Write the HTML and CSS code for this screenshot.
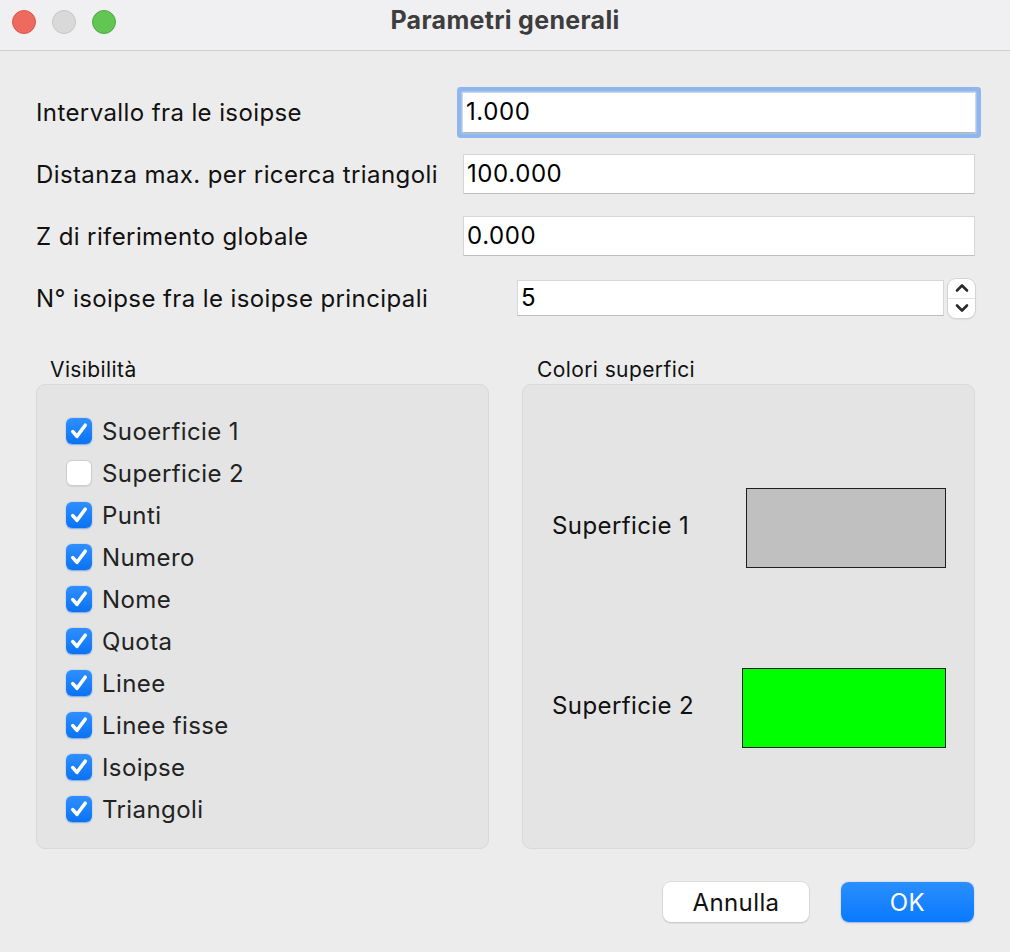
FILE: index.html
```html
<!DOCTYPE html>
<html lang="it">
<head>
<meta charset="utf-8">
<title>Parametri generali</title>
<link rel="stylesheet" href="styles.css">
</head>
<body>
<div class="window">
  <div class="titlebar">
    <div class="lights">
      <span class="light red"></span>
      <span class="light gray"></span>
      <span class="light green"></span>
    </div>
    <div class="title">Parametri generali</div>
    <div></div>
  </div>
  <div class="content">
    <div class="fields">
      <div class="row">
        <span class="label">Intervallo fra le isoipse</span>
        <div class="input focused">1.000</div>
      </div>
      <div class="row">
        <span class="label">Distanza max. per ricerca triangoli</span>
        <div class="input">100.000</div>
      </div>
      <div class="row">
        <span class="label">Z di riferimento globale</span>
        <div class="input">0.000</div>
      </div>
      <div class="row">
        <span class="label">N° isoipse fra le isoipse principali</span>
        <div class="spin">
          <div class="input spin-field">5</div>
          <div class="stepper">
            <span class="step up"><svg width="16" height="10" viewBox="0 0 16 10"><path d="M3 7.5 L8 2.5 L13 7.5" fill="none" stroke="#2a2a2a" stroke-width="2.6" stroke-linecap="round" stroke-linejoin="round"/></svg></span>
            <span class="step down"><svg width="16" height="10" viewBox="0 0 16 10"><path d="M3 2.5 L8 7.5 L13 2.5" fill="none" stroke="#2a2a2a" stroke-width="2.6" stroke-linecap="round" stroke-linejoin="round"/></svg></span>
          </div>
        </div>
      </div>
    </div>

    <div class="groups">
      <div class="group">
        <div class="group-title">Visibilità</div>
        <div class="group-box checks">
          <div class="check"><span class="box on"><svg width="26" height="26" viewBox="0 0 26 26"><path d="M6.8 13.6 L11 18.3 L19.2 7.2" fill="none" stroke="#fff" stroke-width="3.6" stroke-linecap="round" stroke-linejoin="round"/></svg></span>Suoerficie 1</div>
          <div class="check"><span class="box off"></span>Superficie 2</div>
          <div class="check"><span class="box on"><svg width="26" height="26" viewBox="0 0 26 26"><path d="M6.8 13.6 L11 18.3 L19.2 7.2" fill="none" stroke="#fff" stroke-width="3.6" stroke-linecap="round" stroke-linejoin="round"/></svg></span>Punti</div>
          <div class="check"><span class="box on"><svg width="26" height="26" viewBox="0 0 26 26"><path d="M6.8 13.6 L11 18.3 L19.2 7.2" fill="none" stroke="#fff" stroke-width="3.6" stroke-linecap="round" stroke-linejoin="round"/></svg></span>Numero</div>
          <div class="check"><span class="box on"><svg width="26" height="26" viewBox="0 0 26 26"><path d="M6.8 13.6 L11 18.3 L19.2 7.2" fill="none" stroke="#fff" stroke-width="3.6" stroke-linecap="round" stroke-linejoin="round"/></svg></span>Nome</div>
          <div class="check"><span class="box on"><svg width="26" height="26" viewBox="0 0 26 26"><path d="M6.8 13.6 L11 18.3 L19.2 7.2" fill="none" stroke="#fff" stroke-width="3.6" stroke-linecap="round" stroke-linejoin="round"/></svg></span>Quota</div>
          <div class="check"><span class="box on"><svg width="26" height="26" viewBox="0 0 26 26"><path d="M6.8 13.6 L11 18.3 L19.2 7.2" fill="none" stroke="#fff" stroke-width="3.6" stroke-linecap="round" stroke-linejoin="round"/></svg></span>Linee</div>
          <div class="check"><span class="box on"><svg width="26" height="26" viewBox="0 0 26 26"><path d="M6.8 13.6 L11 18.3 L19.2 7.2" fill="none" stroke="#fff" stroke-width="3.6" stroke-linecap="round" stroke-linejoin="round"/></svg></span>Linee fisse</div>
          <div class="check"><span class="box on"><svg width="26" height="26" viewBox="0 0 26 26"><path d="M6.8 13.6 L11 18.3 L19.2 7.2" fill="none" stroke="#fff" stroke-width="3.6" stroke-linecap="round" stroke-linejoin="round"/></svg></span>Isoipse</div>
          <div class="check"><span class="box on"><svg width="26" height="26" viewBox="0 0 26 26"><path d="M6.8 13.6 L11 18.3 L19.2 7.2" fill="none" stroke="#fff" stroke-width="3.6" stroke-linecap="round" stroke-linejoin="round"/></svg></span>Triangoli</div>
        </div>
      </div>
      <div class="group">
        <div class="group-title">Colori superfici</div>
        <div class="group-box colors">
          <div class="color-row">
            <span class="color-label">Superficie 1</span>
            <span class="swatch swatch-gray"></span>
          </div>
          <div class="color-row">
            <span class="color-label">Superficie 2</span>
            <span class="swatch swatch-green"></span>
          </div>
        </div>
      </div>
    </div>

    <div class="buttons">
      <div class="btn cancel">Annulla</div>
      <div class="btn ok">OK</div>
    </div>
  </div>
</div>
</body>
</html>
```

FILE: styles.css
```css
* { box-sizing: border-box; }

html, body {
  margin: 0;
  padding: 0;
}

body {
  width: 1010px;
  height: 952px;
  background: #ececec;
  font-family: Inter, "Liberation Sans", sans-serif;
  color: #000;
  overflow: hidden;
}

.window {
  width: 1010px;
  height: 952px;
  display: flex;
  flex-direction: column;
}

.titlebar {
  height: 51px;
  flex: none;
  background: #f0f0f2;
  border-bottom: 1px solid #d2d2d4;
  display: grid;
  grid-template-columns: 1fr auto 1fr;
  align-items: center;
}

.lights {
  display: flex;
  gap: 16px;
  padding-left: 12px;
  padding-bottom: 6px;
}

.light {
  width: 24px;
  height: 24px;
  border-radius: 50%;
  display: block;
}
.light.red { background: #ee6a5f; border: 1px solid #d8574c; }
.light.gray { background: #d9d9d9; border: 1px solid #c6c6c6; }
.light.green { background: #62c554; border: 1px solid #50aa41; }

.title {
  font-size: 25px;
  font-weight: 700;
  letter-spacing: 0.3px;
  color: #3d3d3d;
  padding-bottom: 10px;
}

.content {
  padding: 30px 35px 0 36px;
  display: flex;
  flex-direction: column;
}

.fields {
  display: flex;
  flex-direction: column;
}

.row {
  height: 62px;
  display: flex;
  align-items: center;
  justify-content: space-between;
}

.label {
  font-size: 24px;
  letter-spacing: 0.4px;
  color: #111;
}

.input {
  width: 512px;
  height: 40px;
  background: #fff;
  border: 1px solid #d6d6d6;
  border-bottom-color: #bdbdbd;
  font-size: 24px;
  letter-spacing: 0.6px;
  line-height: 38px;
  padding-left: 3px;
  color: #000;
}

.input.focused {
  width: 514px;
  height: 41px;
  margin-right: -1px;
  border-color: #cfd8e6;
  border-bottom-color: #b5b5b5;
  box-shadow: 0 0 0 1px #a7c4ee, 0 0 0 5px #8fb7ee;
  border-radius: 1px;
}

.spin {
  display: flex;
  align-items: center;
  gap: 4px;
}

.spin-field {
  width: 427px;
  height: 36px;
  line-height: 34px;
}

.stepper {
  width: 27px;
  height: 39px;
  background: #fff;
  border-radius: 8px;
  box-shadow: 0 0 0 1px #d4d4d4, 0 1px 2px rgba(0,0,0,0.15);
  display: flex;
  flex-direction: column;
}

.step {
  flex: 1;
  display: flex;
  align-items: center;
  justify-content: center;
}
.step.up { border-bottom: 1px solid #e2e2e2; }

.groups {
  margin-top: 29px;
  display: flex;
  gap: 33px;
}

.group {
  width: 453px;
  display: flex;
  flex-direction: column;
}

.group-title {
  height: 26px;
  font-size: 21px;
  letter-spacing: 0.4px;
  line-height: 24px;
  padding-left: 14px;
  color: #111;
}
.group:nth-child(2) .group-title { padding-left: 15px; }

.group-box {
  height: 465px;
  background: #e4e4e4;
  border: 1px solid #d9d9d9;
  border-radius: 9px;
}

.checks {
  padding: 25px 0 0 29px;
  display: flex;
  flex-direction: column;
}

.check {
  height: 42px;
  display: flex;
  align-items: center;
  gap: 10px;
  font-size: 24px;
  letter-spacing: 0.4px;
  color: #222;
}

.box {
  width: 26px;
  height: 26px;
  border-radius: 6px;
  display: block;
  flex: none;
}
.box.on {
  background: linear-gradient(#2f8fff, #0a73f3);
  box-shadow: 0 0.5px 1.5px rgba(0, 90, 220, 0.45);
}
.box.off {
  background: #fff;
  border: 1px solid #cdcdcd;
  box-shadow: 0 0.5px 1px rgba(0,0,0,0.08);
}
.box svg { display: block; }

.colors {
  padding: 103px 28px 0 29px;
  display: flex;
  flex-direction: column;
  gap: 100px;
}

.color-row {
  height: 80px;
  display: flex;
  align-items: center;
  justify-content: space-between;
}

.color-label {
  font-size: 24px;
  letter-spacing: 0.4px;
  color: #111;
  margin-top: -6px;
}

.swatch {
  height: 80px;
  border: 1px solid #1e1e1e;
  display: block;
}
.swatch-gray { width: 200px; background: #c0c0c0; }
.swatch-green { width: 204px; background: #00ff00; }

.buttons {
  margin-top: 33px;
  display: flex;
  justify-content: flex-end;
  gap: 32px;
  padding-right: 1px;
}

.btn {
  height: 40px;
  border-radius: 8px;
  font-size: 24px;
  letter-spacing: 0.4px;
  display: flex;
  align-items: center;
  justify-content: center;
}
.btn.cancel {
  width: 146px;
  background: #fff;
  color: #111;
  box-shadow: 0 0 0 0.5px #cfcfcf, 0 1px 2px rgba(0,0,0,0.2);
}
.btn.ok {
  width: 133px;
  background: linear-gradient(#2a8ffe, #0a79fe);
  color: #fff;
  box-shadow: 0 0.5px 1.5px rgba(0,70,200,0.35);
}
```
